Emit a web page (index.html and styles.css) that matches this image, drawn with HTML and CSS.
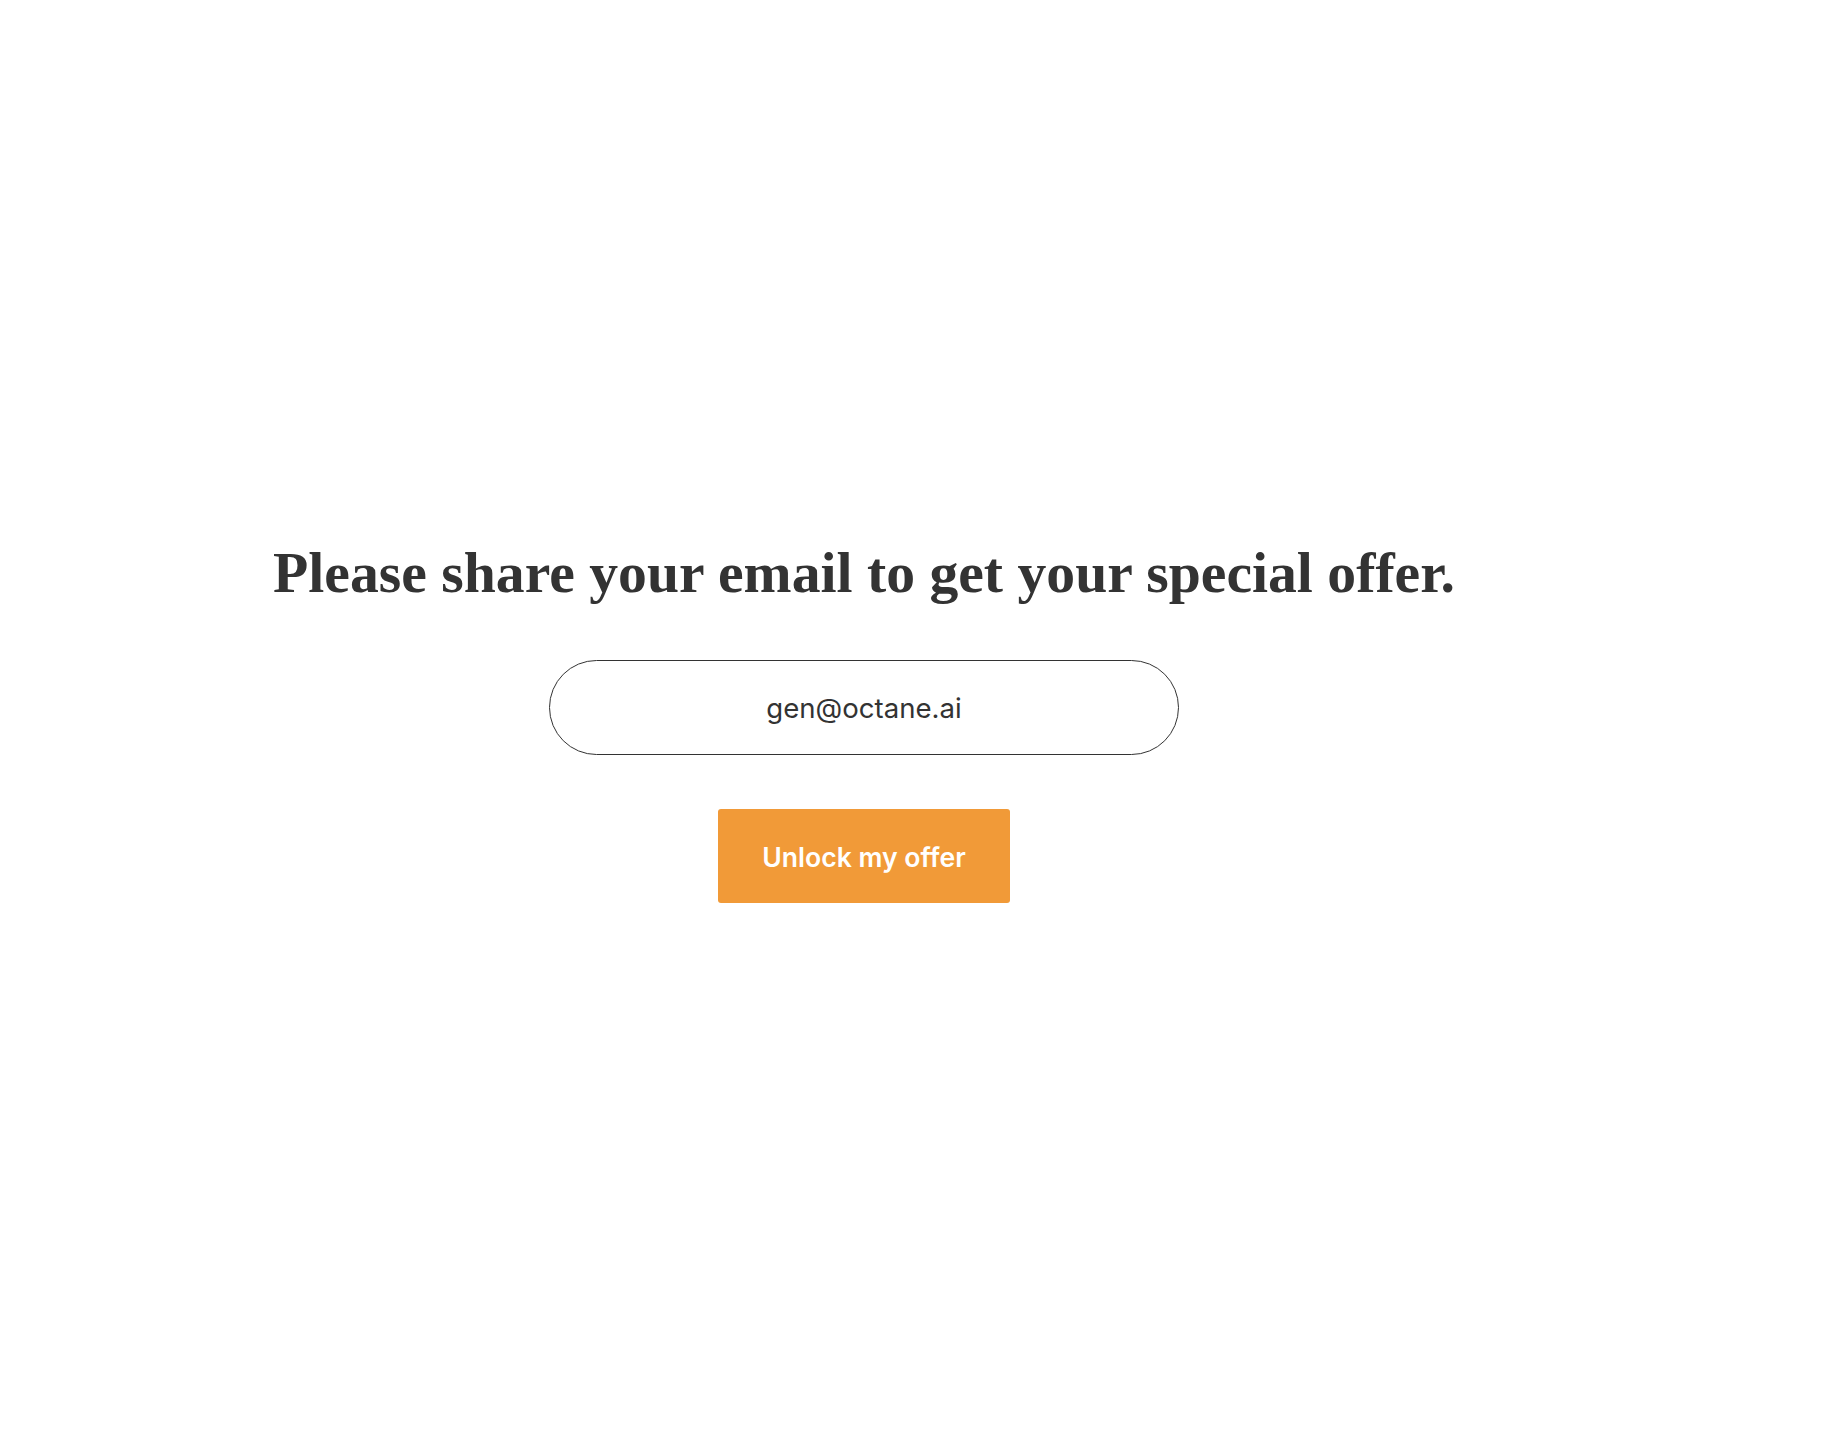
FILE: index.html
```html
<!DOCTYPE html>
<html>
<head>
<meta charset="utf-8">
<link rel="stylesheet" href="styles.css">
</head>
<body>
<main class="page">
  <section class="offer">
    <h1 class="offer-title">Please share your email to get your special offer.</h1>
    <div class="email-field">gen@octane.ai</div>
    <button class="unlock-btn">Unlock my offer</button>
  </section>
</main>
</body>
</html>
```
FILE: styles.css
```css
html, body {
  margin: 0;
  padding: 0;
  background: #ffffff;
}
.page {
  width: 1728px;
  min-height: 1438px;
  display: flex;
  flex-direction: column;
  align-items: center;
}
.offer {
  display: flex;
  flex-direction: column;
  align-items: center;
  padding-top: 533px;
}
.offer-title {
  margin: 0;
  font-family: "Liberation Serif", "Times New Roman", serif;
  font-weight: 700;
  font-size: 57.7px;
  line-height: 80px;
  color: #333333;
  white-space: nowrap;
}
.email-field {
  margin-top: 47px;
  width: 628px;
  height: 93px;
  border: 1px solid #333333;
  border-radius: 48px;
  display: flex;
  align-items: center;
  justify-content: center;
  font-family: Inter, "Noto Sans", sans-serif;
  font-size: 27.6px;
  color: #333333;
}
.unlock-btn {
  margin-top: 54px;
  width: 292px;
  height: 94px;
  padding: 2px 0 0;
  border: none;
  border-radius: 3px;
  background: #f19a38;
  color: #ffffff;
  font-family: Inter, "Noto Sans", sans-serif;
  font-weight: 600;
  font-size: 26.6px;
  cursor: pointer;
}
```
